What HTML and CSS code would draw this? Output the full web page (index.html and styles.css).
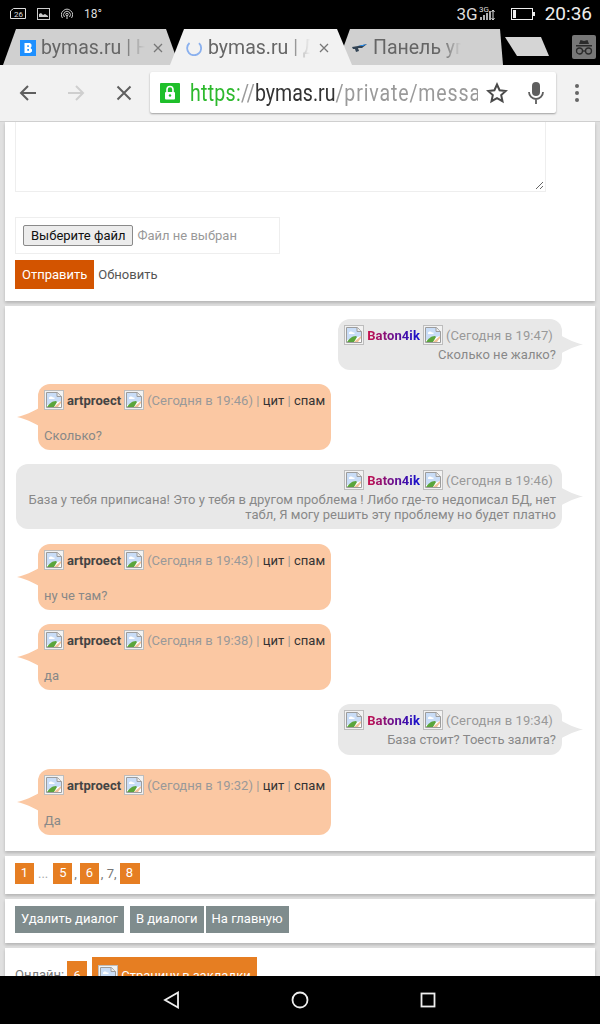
FILE: index.html
```html
<!DOCTYPE html>
<html>

<head>
    <title>bymas.ru</title>
    <link rel="stylesheet" href="styles.css">
</head>

<body>
    <svg class="defs" width="0" height="0">
        <symbol id="broken" viewBox="0 0 20 20">
            <rect x="0.5" y="0.5" width="19" height="19" fill="#f2f2f2" stroke="#bdbdbd"/>
            <path d="M2.500 2.500h11l4 4v11h-15z" fill="#fff" stroke="#9c9c9c"/>
            <path d="M3 3h10v4h4v4L3 15z" fill="#c9ddf7"/>
            <path d="M5 8c0-1.500 3-2 4-.5h1.500v1.500H5z" fill="#fff"/>
            <path d="M3 17c2-3 5-6 9-6l1 1-3 5z" fill="#5aa53c"/>
            <path d="M10 17l7-6v2l-3 4z" fill="#f2c29a"/>
            <path d="M13 2.500v4h4.500" fill="#eaeaea" stroke="#9c9c9c"/>
        </symbol>
        <symbol id="tab-x" viewBox="0 0 10 10">
            <path d="M1 1l8 8M9 1l-8 8" fill="none" stroke="#777" stroke-width="1.300"/>
        </symbol>
    </svg>

    <header class="status-bar">
        <div class="status-left">
            <svg width="16" height="11" viewBox="0 0 16 11"><path d="M0.500 10.500V3l3-2.500h12v10z" fill="none" stroke="#ddd"/><text x="4" y="9" class="status-mini">26</text></svg>
            <svg width="13" height="12" viewBox="0 0 13 12"><rect x="0.500" y="0.500" width="12" height="11" fill="none" stroke="#ccc"/><path d="M2 9V6l2-1 2 2 2-1 3 2v1z" fill="#ccc"/></svg>
            <svg width="12" height="12" viewBox="0 0 12 12" fill="none" stroke="#ccc"><path d="M1.500 10a5.500 5.500 0 1 1 9 0"/><path d="M3.500 9a3.400 3.400 0 1 1 5 0"/><circle cx="6" cy="6.500" r="1.200"/><path d="M6 8v3"/></svg>
            <span class="temp">18°</span>
        </div>
        <div class="status-right">
            <span class="net">3G</span>
            <svg width="17" height="15" viewBox="0 0 17 15"><text x="0" y="6" class="status-mini">3G</text><path d="M2 14v-3M5 14V9M8 14V7M11 14V5" stroke="#ddd" stroke-width="1.600"/><path d="M14 4v10M12.500 6L14 4l1.500 2M12.500 12l1.500 2 1.500-2" stroke="#ddd" fill="none"/></svg>
            <svg class="battery" width="24" height="12" viewBox="0 0 24 12"><rect x="0.500" y="0.500" width="21" height="11" fill="none" stroke="#eee"/><rect x="2" y="2" width="3" height="8" fill="#eee"/><rect x="22" y="4" width="2" height="4" fill="#eee"/></svg>
            <span class="clock">20:36</span>
        </div>
    </header>

    <div class="tab-strip">
        <div class="tab tab-first">
            <svg width="16" height="16" viewBox="0 0 16 16"><rect width="16" height="16" fill="#1e90ff"/><path d="M4.500 3h5.500l1.500 1.500v2L10.500 8l1.500 1.500v2L10 13H4.500zM7.300 5.200v1.700h1.500V5.200zM7.300 9v1.800h1.700V9z" fill="#fff" fill-rule="evenodd"/></svg>
            <span class="tab-title">bymas.ru | Новости</span>
            <svg class="tab-close"><use href="#tab-x"/></svg>
        </div>
        <div class="tab tab-active">
            <svg width="16" height="16" viewBox="0 0 16 16"><path d="M3.500 3a7 7 0 1 0 9.500 .2" fill="none" stroke="#8ab0ee" stroke-width="1.800"/></svg>
            <span class="tab-title">bymas.ru | Диалоги</span>
            <svg class="tab-close"><use href="#tab-x"/></svg>
        </div>
        <div class="tab tab-last">
            <svg width="16" height="8" viewBox="0 0 16 8"><path d="M0 3l6-1 9-2-5 4H6l1 3-3 1-1-3H1z" fill="#345"/><path d="M6 2l9-2-4 2z" fill="#1e90ff"/></svg>
            <span class="tab-title">Панель управления</span>
        </div>
        <div class="tab-new"></div>
        <div class="incognito">
            <svg width="20" height="18" viewBox="0 0 20 18"><path d="M2 7h16v1.500H2zM5 6l1.500-4 3.500 1 3.500-1L15 6z" fill="#2b2b2b"/><circle cx="5.500" cy="13" r="3" fill="none" stroke="#2b2b2b" stroke-width="1.300"/><circle cx="14.500" cy="13" r="3" fill="none" stroke="#2b2b2b" stroke-width="1.300"/><path d="M8.500 13h3" stroke="#2b2b2b" stroke-width="1.300"/></svg>
        </div>
    </div>

    <div class="toolbar">
        <svg class="tool" width="20" height="20" viewBox="0 0 20 20" fill="none" stroke="#5f5f5f" stroke-width="2"><path d="M18 10H3M10 3l-7 7 7 7"/></svg>
        <svg class="tool" width="20" height="20" viewBox="0 0 20 20" fill="none" stroke="#cfcfcf" stroke-width="2"><path d="M2 10h15M10 3l7 7-7 7"/></svg>
        <svg class="tool" width="20" height="20" viewBox="0 0 20 20" fill="none" stroke="#5f5f5f" stroke-width="2"><path d="M3.500 3.500l13 13M16.500 3.500l-13 13"/></svg>
        <div class="omnibox">
            <svg class="lock" width="20" height="20" viewBox="0 0 20 20"><rect width="20" height="20" rx="1" fill="#1fbf2a"/><rect x="5" y="9" width="10" height="7.500" rx="1" fill="#fff"/><path d="M7 9V6.500a3 3 0 0 1 6 0V9" fill="none" stroke="#fff" stroke-width="1.600"/><circle cx="10" cy="12.500" r="1.200" fill="#1fbf2a"/></svg>
            <div class="url"><div class="url-text"><span class="url-green">https:</span><span class="url-gray">//</span><span class="url-host">bymas.ru</span><span class="url-gray url-path">/private/messages</span></div></div>
            <svg class="star" width="22" height="22" viewBox="0 0 22 22"><path d="M11 2.500l2.600 5.700 6.200.7-4.600 4.200 1.300 6.100L11 16.100l-5.500 3.100 1.300-6.100-4.600-4.200 6.200-.7z" fill="none" stroke="#4a4a4a" stroke-width="2"/></svg>
            <svg class="mic" width="16" height="24" viewBox="0 0 16 24"><rect x="4" y="1" width="8" height="14" rx="4" fill="#5f5f5f"/><path d="M1 11a7 7 0 0 0 14 0M8 18v5" fill="none" stroke="#5f5f5f" stroke-width="1.800"/></svg>
        </div>
        <div class="menu-dots"><i></i><i></i><i></i></div>
    </div>

    <main class="page">
        <section class="card card-form">
            <div class="textarea-box">
                <svg class="grip" width="9" height="9" viewBox="0 0 9 9" stroke="#666"><path d="M1 8l7-7M5 8l3-3"/></svg>
            </div>
            <div class="file-box">
                <span class="file-btn">Выберите файл</span>
                <span class="file-name">Файл не выбран</span>
            </div>
            <div class="form-actions">
                <span class="btn-send">Отправить</span>
                <span class="link-refresh">Обновить</span>
            </div>
        </section>

        <section class="card card-chat">
            <div class="msg msg-out">
                <div class="msg-head"><svg class="broken"><use href="#broken"/></svg><b class="nick-baton">Baton4ik</b><svg class="broken"><use href="#broken"/></svg><span>(Сегодня в 19:47)</span></div>
                <div class="msg-text">Сколько не жалко?</div>
            </div>
            <div class="msg msg-in">
                <div class="msg-head"><svg class="broken"><use href="#broken"/></svg><b>artproect</b><svg class="broken"><use href="#broken"/></svg><span>(Сегодня в 19:46) | <a>цит</a> | <a>спам</a></span></div>
                <div class="msg-text">Сколько?</div>
            </div>
            <div class="msg msg-out msg-wide">
                <div class="msg-head"><svg class="broken"><use href="#broken"/></svg><b class="nick-baton">Baton4ik</b><svg class="broken"><use href="#broken"/></svg><span>(Сегодня в 19:46)</span></div>
                <div class="msg-text">База у тебя приписана! Это у тебя в другом проблема ! Либо где-то недописал БД, нет табл, Я могу решить эту проблему но будет платно</div>
            </div>
            <div class="msg msg-in">
                <div class="msg-head"><svg class="broken"><use href="#broken"/></svg><b>artproect</b><svg class="broken"><use href="#broken"/></svg><span>(Сегодня в 19:43) | <a>цит</a> | <a>спам</a></span></div>
                <div class="msg-text">ну че там?</div>
            </div>
            <div class="msg msg-in">
                <div class="msg-head"><svg class="broken"><use href="#broken"/></svg><b>artproect</b><svg class="broken"><use href="#broken"/></svg><span>(Сегодня в 19:38) | <a>цит</a> | <a>спам</a></span></div>
                <div class="msg-text">да</div>
            </div>
            <div class="msg msg-out">
                <div class="msg-head"><svg class="broken"><use href="#broken"/></svg><b class="nick-baton">Baton4ik</b><svg class="broken"><use href="#broken"/></svg><span>(Сегодня в 19:34)</span></div>
                <div class="msg-text">База стоит? Тоесть залита?</div>
            </div>
            <div class="msg msg-in">
                <div class="msg-head"><svg class="broken"><use href="#broken"/></svg><b>artproect</b><svg class="broken"><use href="#broken"/></svg><span>(Сегодня в 19:32) | <a>цит</a> | <a>спам</a></span></div>
                <div class="msg-text">Да</div>
            </div>
        </section>

        <section class="card card-pages">
            <a class="pg">1</a><span class="pg-sep pg-dots">...</span><a class="pg">5</a><span class="pg-sep">,</span><a class="pg">6</a><span class="pg-sep">, 7,</span><a class="pg pg-wide">8</a>
        </section>

        <section class="card card-links">
            <a class="btn-gray btn-delete">Удалить диалог</a>
            <a class="btn-gray">В диалоги</a>
            <a class="btn-gray">На главную</a>
        </section>

        <section class="card card-online">
            <span class="online-label">Онлайн:</span>
            <a class="online-count">6</a>
            <a class="bookmark"><svg class="broken"><use href="#broken"/></svg>Страницу в закладки</a>
        </section>
    </main>

    <footer class="nav-bar">
        <svg width="18" height="18" viewBox="0 0 18 18" fill="none" stroke="#eee" stroke-width="1.800"><path d="M15 1.500v15L2 9z"/></svg>
        <svg width="18" height="18" viewBox="0 0 18 18" fill="none" stroke="#eee" stroke-width="1.800"><circle cx="9" cy="9" r="7.500"/></svg>
        <svg width="18" height="18" viewBox="0 0 18 18" fill="none" stroke="#eee" stroke-width="1.800"><rect x="2.500" y="2.500" width="13" height="13"/></svg>
    </footer>
</body>

</html>
```

FILE: styles.css
```css
html,
body {
    margin: 0;
    padding: 0;
    height: 1024px;
    overflow: hidden;
}

body {
    display: flex;
    flex-direction: column;
    background-color: #000;
    font-family: Roboto, "Liberation Sans", sans-serif;
    font-size: 13px;
    color: #999;
}

.defs {
    display: block;
    height: 0;
}

/* status bar */

.status-bar {
    height: 29px;
    flex: none;
    display: flex;
    justify-content: space-between;
    align-items: center;
    padding: 0 8px 2px 10px;
    box-sizing: border-box;
    color: #ddd;
}

.status-left,
.status-right {
    display: flex;
    align-items: center;
}

.status-left {
    gap: 11px;
}

.status-mini {
    font-size: 8px;
    fill: #ddd;
}

.temp {
    font-size: 12px;
}

.net {
    font-size: 17px;
    margin-right: 1px;
}

.battery {
    margin: 0 10px 0 15px;
}

.clock {
    font-size: 19px;
    color: #eee;
}

/* tabs */

.tab-strip {
    height: 36px;
    flex: none;
    display: flex;
    align-items: flex-start;
    padding-left: 3px;
}

.tab {
    height: 36px;
    width: 176px;
    flex: none;
    display: flex;
    align-items: center;
    gap: 5px;
    box-sizing: border-box;
    padding: 1px 16px 0 17px;
    background-color: #d0d0d0;
    color: #666;
    font-size: 19.5px;
    clip-path: polygon(0 100%, 13px 0, 163px 0, 100% 100%);
}

.tab-active {
    background-color: #f2f2f2;
    margin-left: -9px;
    z-index: 2;
    width: 182px;
    padding: 1px 23px 0 16px;
    gap: 6px;
    clip-path: polygon(0 100%, 14px 0, 167px 0, 100% 100%);
}

.tab-last {
    margin-left: -15px;
    width: 166px;
    padding: 1px 42px 0 15px;
    z-index: 1;
}

.tab-title {
    flex: 1;
    min-width: 0;
    white-space: nowrap;
    overflow: hidden;
    -webkit-mask-image: linear-gradient(to right, #000 78%, transparent);
    mask-image: linear-gradient(to right, #000 78%, transparent);
}

.tab-close {
    width: 10px;
    height: 10px;
    flex: none;
    margin-left: 3px;
}

.tab-new {
    width: 44px;
    height: 19px;
    margin: 8px 0 0 2px;
    flex: none;
    background-color: #d5d5d5;
    clip-path: polygon(0 0, 36px 0, 100% 100%, 12px 100%);
}

.incognito {
    width: 24px;
    height: 24px;
    margin: 6px 0 0 23px;
    flex: none;
    background-color: #777;
    border-radius: 2px;
    display: flex;
    align-items: center;
    justify-content: center;
}

/* toolbar */

.toolbar {
    height: 57px;
    flex: none;
    box-sizing: border-box;
    background-color: #f2f2f2;
    display: flex;
    align-items: center;
    padding: 0 0 1px 18px;
    border-bottom: 1px solid #cfcfcf;
    z-index: 3;
}

.tool {
    margin-right: 28px;
    flex: none;
}

.tool:nth-child(3) {
    margin-right: 16px;
}

.omnibox {
    width: 406px;
    height: 41px;
    flex: none;
    box-sizing: border-box;
    background-color: #fff;
    border-radius: 2px;
    box-shadow: 0 1px 2px rgba(0, 0, 0, 0.35);
    display: flex;
    align-items: center;
    padding: 0 8px 0 10px;
}

.lock {
    flex: none;
    margin-right: 10px;
}

.url {
    flex: 1;
    min-width: 0;
    overflow: hidden;
    margin-right: 8px;
    padding-top: 1px;
}

.url-text {
    white-space: nowrap;
    font-size: 23px;
    transform: scaleX(0.85);
    transform-origin: left center;
}

.url-green {
    color: #2db92d;
    letter-spacing: 0.3px;
}

.url-gray {
    color: #9a9a9a;
}

.url-path {
    letter-spacing: 1px;
}

.url-host {
    color: #333;
}

.star {
    flex: none;
    margin-right: 20px;
}

.mic {
    flex: none;
    margin-right: 4px;
}

.menu-dots {
    display: flex;
    flex-direction: column;
    gap: 3px;
    margin-left: 19px;
}

.menu-dots i {
    width: 4px;
    height: 4px;
    border-radius: 50%;
    background-color: #666;
}

/* page */

.page {
    height: 854px;
    flex: none;
    overflow: hidden;
    background-color: #e0e0e0;
    padding: 0 5px;
    box-sizing: border-box;
}

.card {
    background-color: #fff;
    box-shadow: 0 2px 3px rgba(0, 0, 0, 0.2);
    margin-bottom: 5px;
    padding: 0 10px;
}

.card-form {
    height: 179px;
    box-sizing: border-box;
}

.textarea-box {
    width: 531px;
    height: 70px;
    box-sizing: border-box;
    border: 1px solid #eee;
    border-top: 0;
    display: flex;
    align-items: flex-end;
    justify-content: flex-end;
    padding: 0 1px 1px 0;
}

.grip {
    display: block;
}

.file-box {
    width: 265px;
    height: 37px;
    box-sizing: border-box;
    margin-top: 25px;
    border: 1px solid #eee;
    display: flex;
    align-items: center;
    padding-left: 7px;
    gap: 4px;
}

.file-btn {
    height: 21px;
    line-height: 19px;
    box-sizing: border-box;
    padding: 0 7px;
    border: 1px solid #8a8a8a;
    border-radius: 2px;
    background-color: #ececec;
    color: #111;
    white-space: nowrap;
}

.file-name {
    color: #999;
}

.form-actions {
    margin-top: 6px;
    display: flex;
    align-items: center;
}

.btn-send {
    height: 29px;
    line-height: 29px;
    padding: 0 7px;
    background-color: #d35400;
    color: #fff;
}

.link-refresh {
    color: #555;
    margin-left: 4px;
}

/* chat */

.card-chat {
    height: 545px;
    box-sizing: border-box;
    padding: 13px 33px 0 11px;
    display: flex;
    flex-direction: column;
    gap: 14px;
}

.msg {
    flex: none;
    box-sizing: border-box;
    border-radius: 12px;
    padding: 6px 6px 8px;
    position: relative;
    line-height: 15px;
}

.msg::after {
    content: "";
    position: absolute;
    top: 50%;
    width: 22px;
    height: 20px;
    margin-top: -10px;
    background-color: inherit;
}

.msg-out {
    align-self: flex-end;
    background-color: #e8e8e8;
    text-align: right;
}

.msg-out .msg-head {
    margin-right: 3px;
    letter-spacing: 0.1px;
}

.msg-out::after {
    left: 100%;
    margin-left: -1px;
    clip-path: path("M0 1 C7 5 13 8 22 10 C13 12 7 15 0 19 Z");
}

.msg-in {
    align-self: flex-start;
    margin-left: 22px;
    background-color: #fbc8a3;
    width: 293px;
    height: 66px;
}

.msg-in::after {
    right: 100%;
    margin-right: -1px;
    clip-path: path("M22 1 C15 5 9 8 0 10 C9 12 15 15 22 19 Z");
}

.msg-wide {
    align-self: stretch;
    padding-bottom: 7px;
    margin-bottom: 1px;
}

.msg-head {
    display: flex;
    align-items: center;
    gap: 3px;
    height: 20px;
    white-space: nowrap;
    justify-content: flex-end;
    letter-spacing: 0.03px;
}

.msg-in .msg-head {
    justify-content: flex-start;
}

.msg-head b {
    color: #444;
    font-weight: 700;
}

.msg-head a {
    color: #333;
}

.nick-baton {
    background: linear-gradient(to right, #c8104a, #1010d0);
    -webkit-background-clip: text;
    background-clip: text;
    -webkit-text-fill-color: transparent;
}

.broken {
    width: 20px;
    height: 20px;
    flex: none;
}

.msg-text {
    color: #888;
    margin-top: 2px;
    letter-spacing: 0.03px;
}

.msg-in .msg-text {
    margin-top: 18px;
}

/* pager and buttons */

.card-pages {
    height: 38px;
    box-sizing: border-box;
    display: flex;
    align-items: center;
    padding-bottom: 3px;
    color: #777;
}

.pg {
    width: 19px;
    height: 21px;
    line-height: 20px;
    text-align: center;
    background-color: #e67e22;
    color: #fff;
}

.pg-wide {
    width: 20px;
}

.pg-sep {
    margin: 0 3px 0 2px;
    white-space: pre;
}

.pg-dots {
    margin: 0 5px 0 4px;
    color: #aaa;
}

.card-links {
    height: 44px;
    box-sizing: border-box;
    display: flex;
    padding-top: 7px;
    gap: 2px;
}

.btn-gray {
    height: 27px;
    line-height: 26px;
    padding: 0 6px;
    background-color: #7f8c8d;
    color: #fff;
}

.btn-delete {
    margin-right: 4px;
}

.card-online {
    height: 60px;
    box-sizing: border-box;
    display: flex;
    align-items: flex-start;
    padding-top: 9px;
    color: #777;
}

.online-label {
    margin-top: 10px;
}

.online-count {
    margin: 4px 0 0 3px;
    width: 20px;
    height: 28px;
    line-height: 30px;
    text-align: center;
    background-color: #e67e22;
    color: #fff;
}

.bookmark {
    margin-left: 5px;
    display: flex;
    align-items: center;
    gap: 3px;
    height: 36px;
    padding: 0 6px;
    background-color: #e67e22;
    color: #fff;
    white-space: nowrap;
}

/* android nav */

.nav-bar {
    height: 48px;
    flex: none;
    background-color: #000;
    display: flex;
    justify-content: center;
    align-items: center;
    gap: 110px;
    z-index: 3;
}
```
